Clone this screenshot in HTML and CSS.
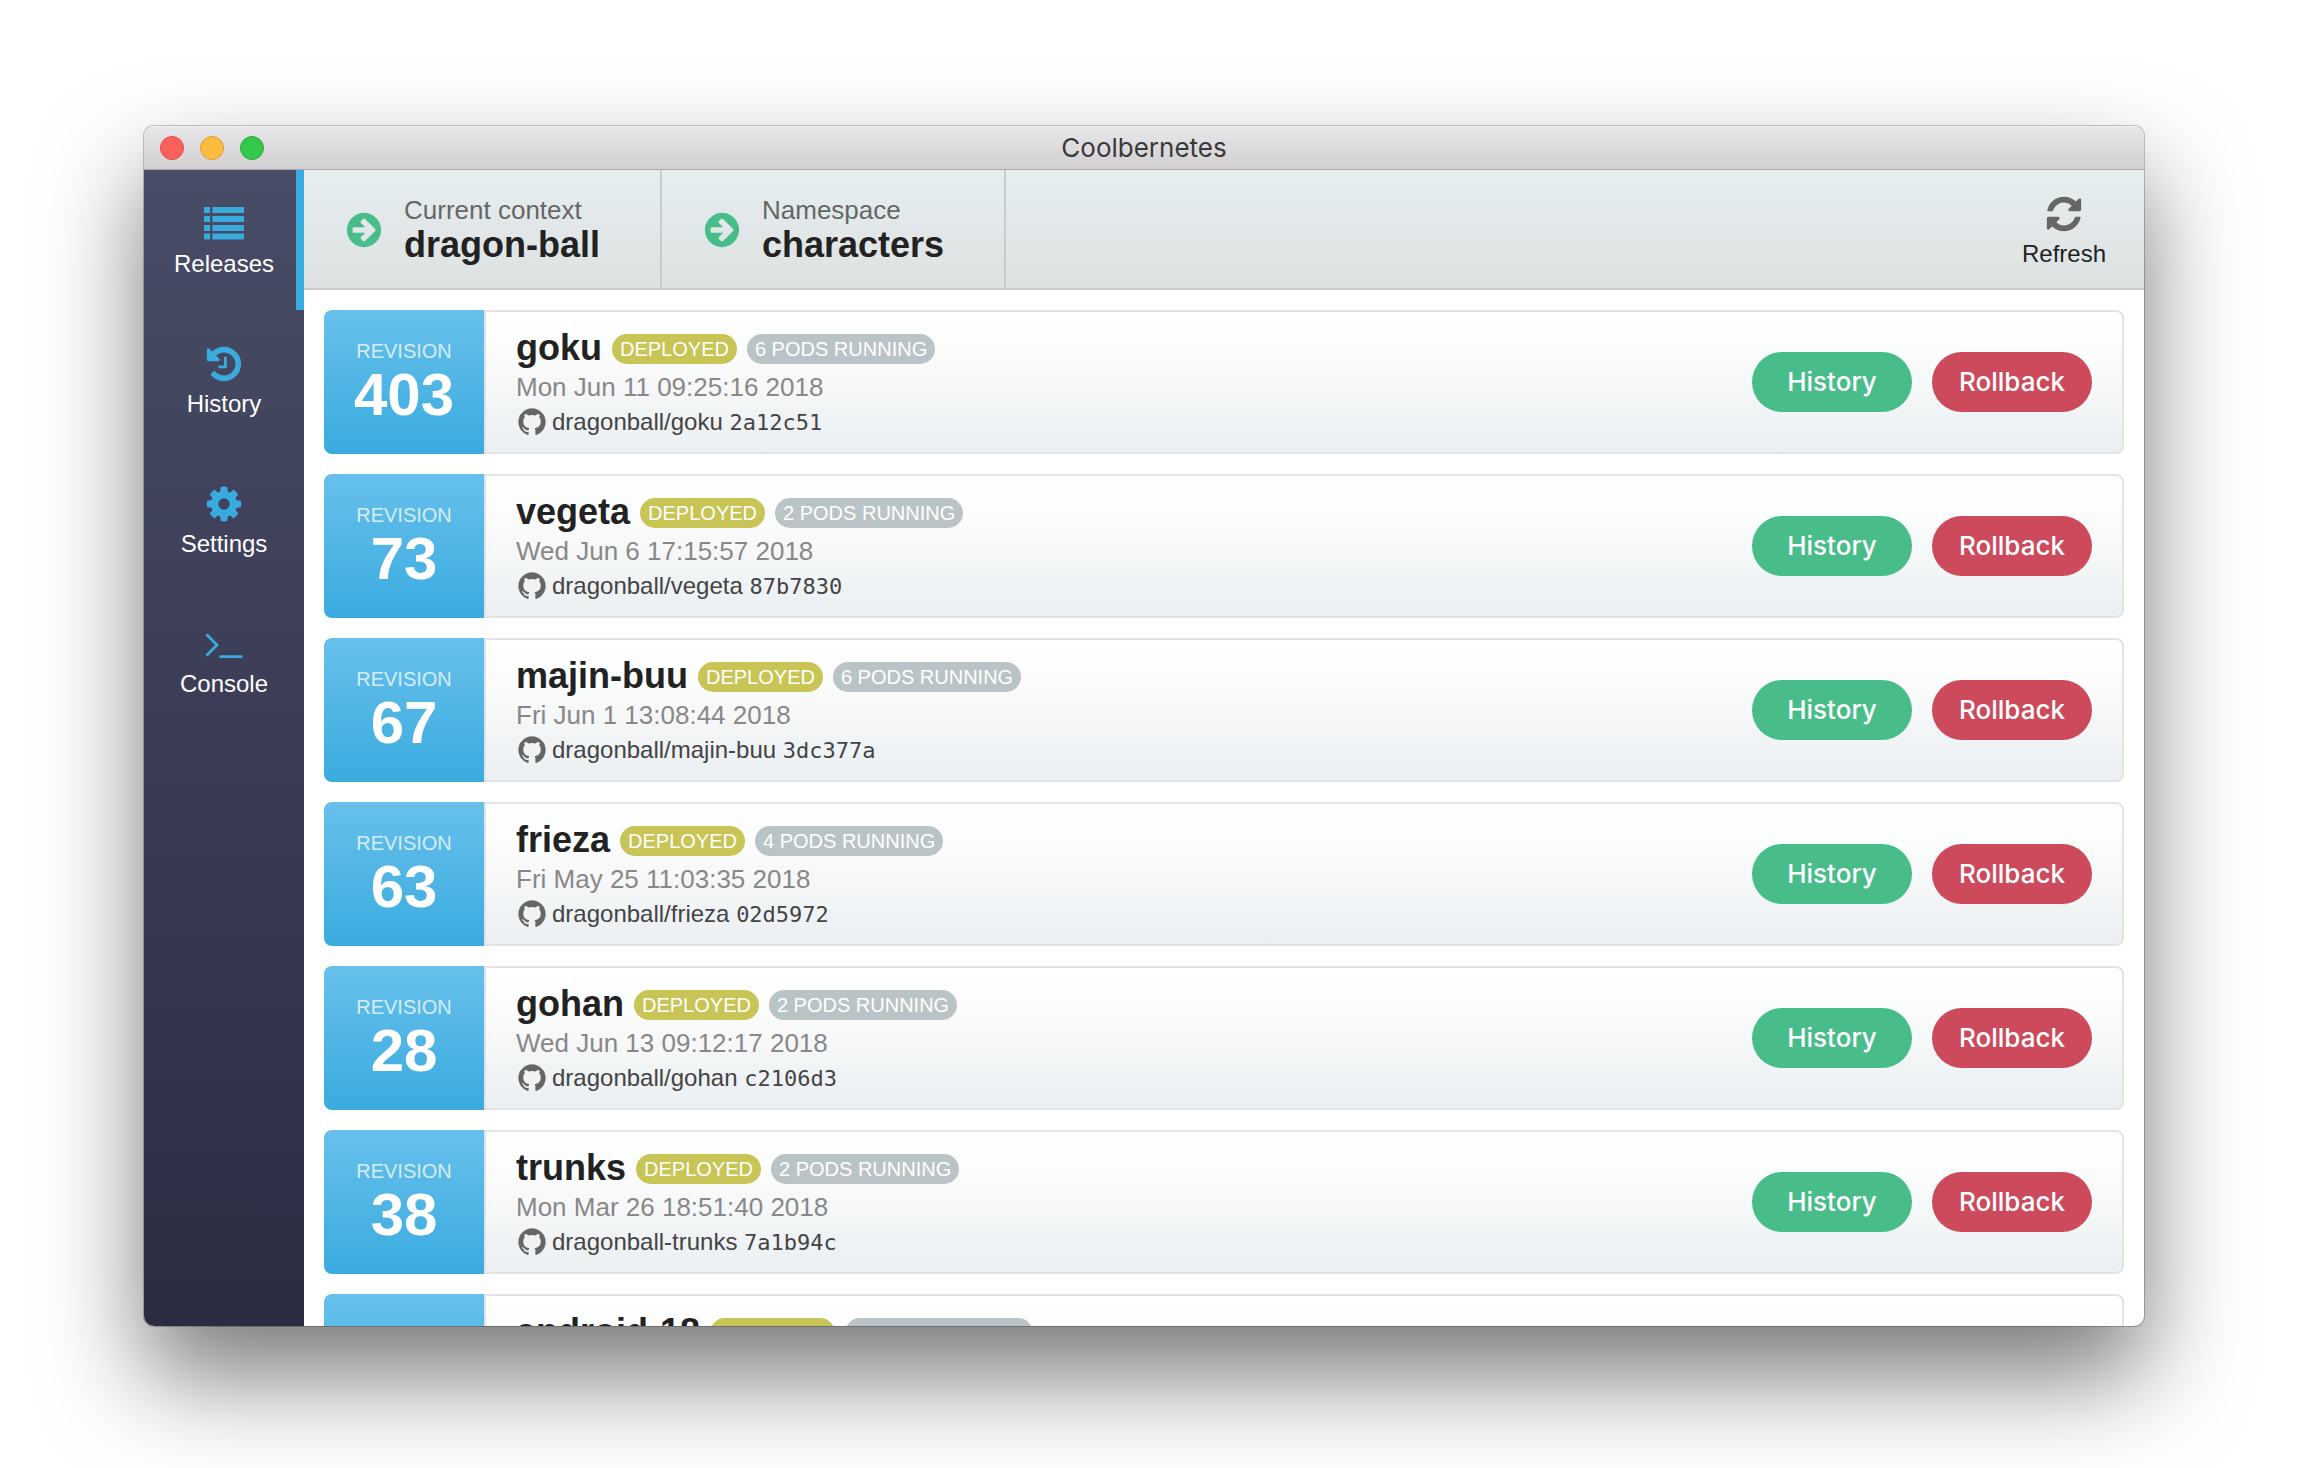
FILE: index.html
```html
<!DOCTYPE html>
<html lang="en">
<head>
<meta charset="utf-8">
<title>Coolbernetes</title>
<link rel="stylesheet" href="styles.css">
</head>
<body>
<svg class="sprite" aria-hidden="true">
  <symbol id="i-arrow" viewBox="0 0 1792 1792"><path d="M1413 896q0-27-18-45l-91-91-362-362q-18-18-45-18t-45 18l-91 91q-18 18-18 45t18 45l189 189h-502q-26 0-45 19t-19 45v128q0 26 19 45t45 19h502l-189 189q-18 18-18 45t18 45l91 91q18 18 45 18t45-18l362-362 91-91q18-18 18-45zm251 0q0 209-103 385.5t-279.5 279.5-385.5 103-385.5-103-279.5-279.5-103-385.5 103-385.5 279.5-279.5 385.5-103 385.5 103 279.5 279.5 103 385.5z" transform="translate(0 0)"/></symbol>
  <symbol id="i-list" viewBox="0 0 40 40"><path d="M0 3h6v6H0zM8.500 3H40v6H8.500zM0 12h6v6H0zM8.500 12H40v6H8.500zM0 21h6v6H0zM8.500 21H40v6H8.500zM0 29.500h6v6H0zM8.500 29.500H40v6H8.500z"/></symbol>
  <symbol id="i-history" viewBox="0 0 1792 1792"><path d="M1664 896q0 156-61 298t-164 245-245 164-298 61q-172 0-327-72.5t-264-204.5q-7-10-6.5-22.5t8.5-20.5l137-138q10-9 25-9 16 2 23 12 73 95 179 147t225 52q104 0 198.5-40.5t163.5-109.5 109.5-163.5 40.5-198.5-40.5-198.5-109.5-163.5-163.5-109.5-198.5-40.5q-98 0-188 35.5t-160 101.5l137 138q31 30 14 69-17 40-59 40h-448q-26 0-45-19t-19-45v-448q0-42 40-59 39-17 69 14l130 129q107-101 244.5-156.5t284.5-55.5q156 0 298 61t245 164 164 245 61 298zm-640-288v448q0 14-9 23t-23 9h-320q-14 0-23-9t-9-23v-64q0-14 9-23t23-9h224v-352q0-14 9-23t23-9h64q14 0 23 9t9 23z"/></symbol>
  <symbol id="i-cog" viewBox="0 0 1792 1792"><path d="M1152 896q0-106-75-181t-181-75-181 75-75 181 75 181 181 75 181-75 75-181zm512-109v222q0 12-8 23t-20 13l-185 28q-19 54-39 91 35 50 107 138 10 12 10 25t-9 23q-27 37-99 108t-94 71q-12 0-26-9l-138-108q-44 23-91 38-16 136-29 186-7 28-36 28h-222q-14 0-24.5-8.5t-11.5-21.5l-28-184q-49-16-90-37l-141 107q-10 9-25 9-14 0-25-11-126-114-165-168-7-10-7-23 0-12 8-23 15-21 51-66.5t54-70.5q-27-50-41-99l-183-27q-13-2-21-12.5t-8-23.5v-222q0-12 8-23t19-13l186-28q14-46 39-92-40-57-107-138-10-12-10-24 0-10 9-23 26-36 98.5-107.5t94.5-71.5q13 0 26 10l138 107q44-23 91-38 16-136 29-186 7-28 36-28h222q14 0 24.5 8.5t11.5 21.5l28 184q49 16 90 37l142-107q9-9 24-9 13 0 25 10 129 119 165 170 7 8 7 22 0 12-8 23-15 21-51 66.5t-54 70.5q26 50 41 98l183 28q13 2 21 12.5t8 23.5z"/></symbol>
  <symbol id="i-console" viewBox="0 0 40 40"><path d="M2.500 10.500 13 21 2.500 31.500M15.500 32.700H38.500" fill="none" stroke="currentColor" stroke-width="2.800"/></symbol>
  <symbol id="i-refresh" viewBox="0 0 1792 1792"><path d="M1639 1056q0 5-1 7-64 268-268 434.5t-478 166.5q-146 0-282.5-55t-243.5-157l-129 129q-19 19-45 19t-45-19-19-45v-448q0-26 19-45t45-19h448q26 0 45 19t19 45-19 45l-137 137q71 66 161 102t187 36q134 0 250-65t186-179q11-17 53-117 8-23 30-23h192q13 0 22.5 9.500t9.500 22.500zm25-800v448q0 26-19 45t-45 19h-448q-26 0-45-19t-19-45 19-45l138-138q-148-137-349-137-134 0-250 65t-186 179q-11 17-53 117-8 23-30 23h-199q-13 0-22.500-9.500t-9.500-22.500v-7q65-268 270-434.500t480-166.500q146 0 284 55.500t245 156.500l130-129q19-19 45-19t45 19 19 45z"/></symbol>
  <symbol id="i-github" viewBox="0 0 1792 1792"><path d="M896 128q209 0 385.5 103t279.5 279.500 103 385.500q0 251-146.500 451.500t-378.500 277.500q-27 5-40-7t-13-30q0-3 .5-76.500t.5-134.500q0-97-52-142 57-6 102.500-18t94-39 81-66.500 53-105 20.500-150.500q0-119-79-206 37-91-8-204-28-9-81 11t-92 44l-38 24q-93-26-192-26t-192 26q-16-11-42.500-27t-83.500-38.500-85-13.500q-45 113-8 204-79 87-79 206 0 85 20.500 150t52.500 105 80.500 67 94 39 102.500 18q-39 36-49 103-21 10-45 15t-57 5-65.500-21.500-55.500-62.500q-19-32-48.500-52t-49.500-24l-20-3q-21 0-29 4.500t-5 11.500 9 14 13 12l7 5q22 10 43.500 38t31.500 51l10 23q13 38 44 61.500t67 30 69.500 7 55.500-3.500l23-4q0 38 .5 88.500t.5 54.500q0 18-13 30t-40 7q-232-77-378.500-277.500t-146.500-451.500q0-209 103-385.500t279.500-279.500 385.500-103z"/></symbol>
</svg>
<div class="window">
  <header class="titlebar">
    <div class="lights">
      <button class="light light-close" aria-label="Close"></button>
      <button class="light light-min" aria-label="Minimize"></button>
      <button class="light light-max" aria-label="Zoom"></button>
    </div>
    <h1 class="title">Coolbernetes</h1>
  </header>
  <div class="app">
    <nav class="sidebar">
      <a class="nav-item active" href="#releases"><svg class="icon"><use href="#i-list"/></svg>Releases</a>
      <a class="nav-item" href="#history"><svg class="icon"><use href="#i-history"/></svg>History</a>
      <a class="nav-item" href="#settings"><svg class="icon"><use href="#i-cog"/></svg>Settings</a>
      <a class="nav-item" href="#console"><svg class="icon"><use href="#i-console"/></svg>Console</a>
    </nav>
    <main class="content">
      <div class="toolbar">
        <button class="selector"><svg class="icon"><use href="#i-arrow"/></svg><span class="selector-text"><span class="selector-label">Current context</span><strong class="selector-value">dragon-ball</strong></span></button>
        <button class="selector"><svg class="icon"><use href="#i-arrow"/></svg><span class="selector-text"><span class="selector-label">Namespace</span><strong class="selector-value">characters</strong></span></button>
        <button class="refresh"><svg class="icon"><use href="#i-refresh"/></svg>Refresh</button>
      </div>
      <div class="releases">
        <article class="card">
          <div class="revision"><span class="revision-label">REVISION</span><span class="revision-number">403</span></div>
          <div class="card-body">
            <div class="info">
              <div class="name-row"><h2 class="name">goku</h2><span class="badge deployed">DEPLOYED</span><span class="badge pods">6 PODS RUNNING</span></div>
              <div class="date">Mon Jun 11 09:25:16 2018</div>
              <div class="repo"><svg class="repo-icon"><use href="#i-github"/></svg><span>dragonball/goku <code class="hash">2a12c51</code></span></div>
            </div>
            <button class="btn btn-history">History</button><button class="btn btn-rollback">Rollback</button>
          </div>
        </article>
        <article class="card">
          <div class="revision"><span class="revision-label">REVISION</span><span class="revision-number">73</span></div>
          <div class="card-body">
            <div class="info">
              <div class="name-row"><h2 class="name">vegeta</h2><span class="badge deployed">DEPLOYED</span><span class="badge pods">2 PODS RUNNING</span></div>
              <div class="date">Wed Jun 6 17:15:57 2018</div>
              <div class="repo"><svg class="repo-icon"><use href="#i-github"/></svg><span>dragonball/vegeta <code class="hash">87b7830</code></span></div>
            </div>
            <button class="btn btn-history">History</button><button class="btn btn-rollback">Rollback</button>
          </div>
        </article>
        <article class="card">
          <div class="revision"><span class="revision-label">REVISION</span><span class="revision-number">67</span></div>
          <div class="card-body">
            <div class="info">
              <div class="name-row"><h2 class="name">majin-buu</h2><span class="badge deployed">DEPLOYED</span><span class="badge pods">6 PODS RUNNING</span></div>
              <div class="date">Fri Jun 1 13:08:44 2018</div>
              <div class="repo"><svg class="repo-icon"><use href="#i-github"/></svg><span>dragonball/majin-buu <code class="hash">3dc377a</code></span></div>
            </div>
            <button class="btn btn-history">History</button><button class="btn btn-rollback">Rollback</button>
          </div>
        </article>
        <article class="card">
          <div class="revision"><span class="revision-label">REVISION</span><span class="revision-number">63</span></div>
          <div class="card-body">
            <div class="info">
              <div class="name-row"><h2 class="name">frieza</h2><span class="badge deployed">DEPLOYED</span><span class="badge pods">4 PODS RUNNING</span></div>
              <div class="date">Fri May 25 11:03:35 2018</div>
              <div class="repo"><svg class="repo-icon"><use href="#i-github"/></svg><span>dragonball/frieza <code class="hash">02d5972</code></span></div>
            </div>
            <button class="btn btn-history">History</button><button class="btn btn-rollback">Rollback</button>
          </div>
        </article>
        <article class="card">
          <div class="revision"><span class="revision-label">REVISION</span><span class="revision-number">28</span></div>
          <div class="card-body">
            <div class="info">
              <div class="name-row"><h2 class="name">gohan</h2><span class="badge deployed">DEPLOYED</span><span class="badge pods">2 PODS RUNNING</span></div>
              <div class="date">Wed Jun 13 09:12:17 2018</div>
              <div class="repo"><svg class="repo-icon"><use href="#i-github"/></svg><span>dragonball/gohan <code class="hash">c2106d3</code></span></div>
            </div>
            <button class="btn btn-history">History</button><button class="btn btn-rollback">Rollback</button>
          </div>
        </article>
        <article class="card">
          <div class="revision"><span class="revision-label">REVISION</span><span class="revision-number">38</span></div>
          <div class="card-body">
            <div class="info">
              <div class="name-row"><h2 class="name">trunks</h2><span class="badge deployed">DEPLOYED</span><span class="badge pods">2 PODS RUNNING</span></div>
              <div class="date">Mon Mar 26 18:51:40 2018</div>
              <div class="repo"><svg class="repo-icon"><use href="#i-github"/></svg><span>dragonball-trunks <code class="hash">7a1b94c</code></span></div>
            </div>
            <button class="btn btn-history">History</button><button class="btn btn-rollback">Rollback</button>
          </div>
        </article>
        <article class="card">
          <div class="revision"></div>
          <div class="card-body">
            <div class="info">
              <div class="name-row"><h2 class="name">android-18</h2><span class="badge deployed">DEPLOYED</span><span class="badge pods">2 PODS RUNNING</span></div>
            </div>
          </div>
        </article>
      </div>
    </main>
  </div>
</div>
</body>
</html>
```
FILE: styles.css
```css
* { box-sizing: border-box; }

body {
  margin: 0;
  height: 100vh;
  padding: 126px 164px 142px 144px;
  background: #fff;
  color: #222;
  font-family: "Liberation Sans", Arial, sans-serif;
  font-size: 24px;
}

button {
  margin: 0;
  padding: 0;
  border: 0;
  background: none;
  color: inherit;
  font: inherit;
}

.sprite { position: absolute; width: 0; height: 0; }
.icon { width: 40px; height: 40px; flex: none; fill: currentColor; }

.window {
  display: flex;
  flex-direction: column;
  height: 100%;
  overflow: hidden;
  border-radius: 10px;
  background: #fff;
  box-shadow: 0 0 0 1px rgba(0, 0, 0, .22), 0 50px 100px rgba(0, 0, 0, .53);
}

/* Title bar */
.titlebar {
  display: grid;
  grid-template-columns: 1fr auto 1fr;
  align-items: center;
  flex: none;
  height: 44px;
  padding: 0 16px;
  border-bottom: 1px solid #aaa8ab;
  background: linear-gradient(#e9e7e9, #d1cfd2);
  box-shadow: inset 0 1px #f5f4f5;
}
.lights { display: flex; gap: 16px; }
.light { width: 24px; height: 24px; border: 1px solid; border-radius: 50%; }
.light-close { background: #fc605c; border-color: #df4a46; }
.light-min { background: #fdbc40; border-color: #de9f34; }
.light-max { background: #34c84a; border-color: #27aa35; }
.title {
  margin: 0;
  color: #3a393a;
  font: 400 26px/32px Inter, sans-serif;
}

.app { display: flex; flex: 1; min-height: 0; }

/* Sidebar */
.sidebar {
  width: 160px;
  flex: none;
  background: linear-gradient(#494c66, #2a2d42);
}
.nav-item {
  display: flex;
  flex-direction: column;
  align-items: center;
  gap: 6px;
  height: 140px;
  padding-top: 34px;
  color: #fff;
  line-height: 28px;
  text-decoration: none;
}
.nav-item.active { box-shadow: inset -8px 0 #3aabdf; }
.nav-item .icon { color: #3aabdf; }

.content { display: flex; flex: 1; flex-direction: column; min-width: 0; }

/* Toolbar */
.toolbar {
  display: flex;
  flex: none;
  height: 120px;
  border-bottom: 2px solid #c8cccd;
  background: linear-gradient(#e6eef0, #dde1e1);
}
.selector {
  display: flex;
  align-items: center;
  gap: 20px;
  padding: 2px 60px 0 40px;
  border-right: 2px solid #c8cccd;
  text-align: left;
}
.selector .icon { color: #48bd89; }
.selector-text { display: flex; flex-direction: column; }
.selector-label { color: #666; font-size: 26px; line-height: 30px; }
.selector-value { font-size: 36px; line-height: 40px; }
.refresh {
  display: flex;
  flex-direction: column;
  align-items: center;
  gap: 6px;
  width: 160px;
  margin-left: auto;
  padding-top: 24px;
  line-height: 28px;
}
.refresh .icon { color: #666; }

/* Releases */
.releases {
  display: flex;
  flex: 1;
  flex-direction: column;
  gap: 20px;
  min-height: 0;
  padding: 20px;
  overflow: auto;
  scrollbar-width: none;
}
.card { display: flex; flex: none; height: 144px; }
.revision {
  display: flex;
  flex-direction: column;
  align-items: center;
  justify-content: center;
  width: 160px;
  padding-top: 2px;
  border-radius: 8px 0 0 8px;
  background: linear-gradient(#67c0ec, #3aabdf);
  color: #fff;
}
.revision-label { color: rgba(255, 255, 255, .75); font-size: 20px; line-height: 24px; }
.revision-number { font-size: 60px; font-weight: 700; line-height: 64px; }
.card-body {
  display: flex;
  flex: 1;
  align-items: center;
  gap: 20px;
  padding: 0 30px;
  border: 2px solid #e0e4e4;
  border-radius: 0 8px 8px 0;
  background: linear-gradient(#fff, #fbfcfc 30%, #ebeff2);
}
.info { flex: 1; align-self: flex-start; padding-top: 14px; }
.name-row { display: flex; align-items: center; gap: 10px; height: 44px; }
.name { margin: 0; font-size: 36px; line-height: 44px; }
.badge {
  margin-top: 2px;
  padding: 0 8px;
  border-radius: 15px;
  color: #fff;
  font-size: 20px;
  line-height: 30px;
}
.deployed { background: #c8c455; }
.pods { background: #bac4c7; }
.date { color: #888; font-size: 26px; line-height: 34px; }
.repo { display: flex; align-items: center; gap: 4px; color: #444; line-height: 36px; }
.repo-icon { width: 32px; height: 32px; fill: #666; }
.hash { font-family: "DejaVu Sans Mono", monospace; font-size: 22px; line-height: 1; }

.btn {
  width: 160px;
  height: 60px;
  border-radius: 30px;
  color: #fff;
  font: 500 26px/32px Inter, sans-serif;
}
.btn-history { background: #48bd89; }
.btn-rollback { background: #cc4a5c; }
```
